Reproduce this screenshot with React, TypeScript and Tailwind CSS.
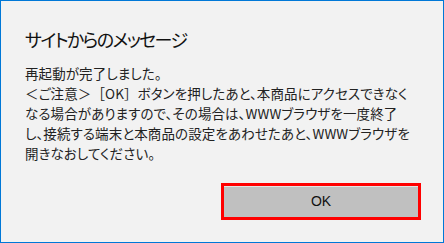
const PUNCT = /([＜＞［］])/;

function Jp({ text }: { text: string }) {
  return (
    <>
      {text.split(PUNCT).map((part, i) =>
        PUNCT.test(part) ? (
          <span key={i} className="[font-feature-settings:normal]">
            {part}
          </span>
        ) : (
          <span key={i}>{part}</span>
        )
      )}
    </>
  );
}

const lines = [
  "再起動が完了しました。",
  "＜ご注意＞［OK］ボタンを押したあと、本商品にアクセスできなく",
  "なる場合がありますので、その場合は、WWWブラウザを一度終了",
  "し、接続する端末と本商品の設定をあわせたあと、WWWブラウザを",
  "開きなおしてください。",
];

export default function App() {
  const jp = "font-['Noto_Sans_CJK_JP','Noto_Sans',sans-serif] [font-feature-settings:'palt']";
  return (
    <div className="w-[444px] h-[243px] border border-[#0078d7] bg-[#f2f2f2] flex flex-col pl-6 pr-[22px] pt-[26px] pb-[22px]">
      <h1 className={`${jp} text-[18px] leading-[24px] text-[#111] tracking-[-1.6px]`}>
        サイトからのメッセージ
      </h1>
      <div className={`${jp} mt-[12px] text-[13.5px] leading-[20px] text-[#222] whitespace-nowrap tracking-[0.1px]`}>
        {lines.map((l, i) => (
          <div key={i}>
            <Jp text={l} />
          </div>
        ))}
      </div>
      <div className="flex-1" />
      <div className="flex justify-end">
        <button className="w-[200px] h-[37px] border-[3px] border-[#ff0000] bg-[#c0c0c0] shadow-[inset_0_1px_0_#e4e4e4] font-['Liberation_Sans',sans-serif] text-[14px] text-[#111]">
          OK
        </button>
      </div>
    </div>
  );
}
